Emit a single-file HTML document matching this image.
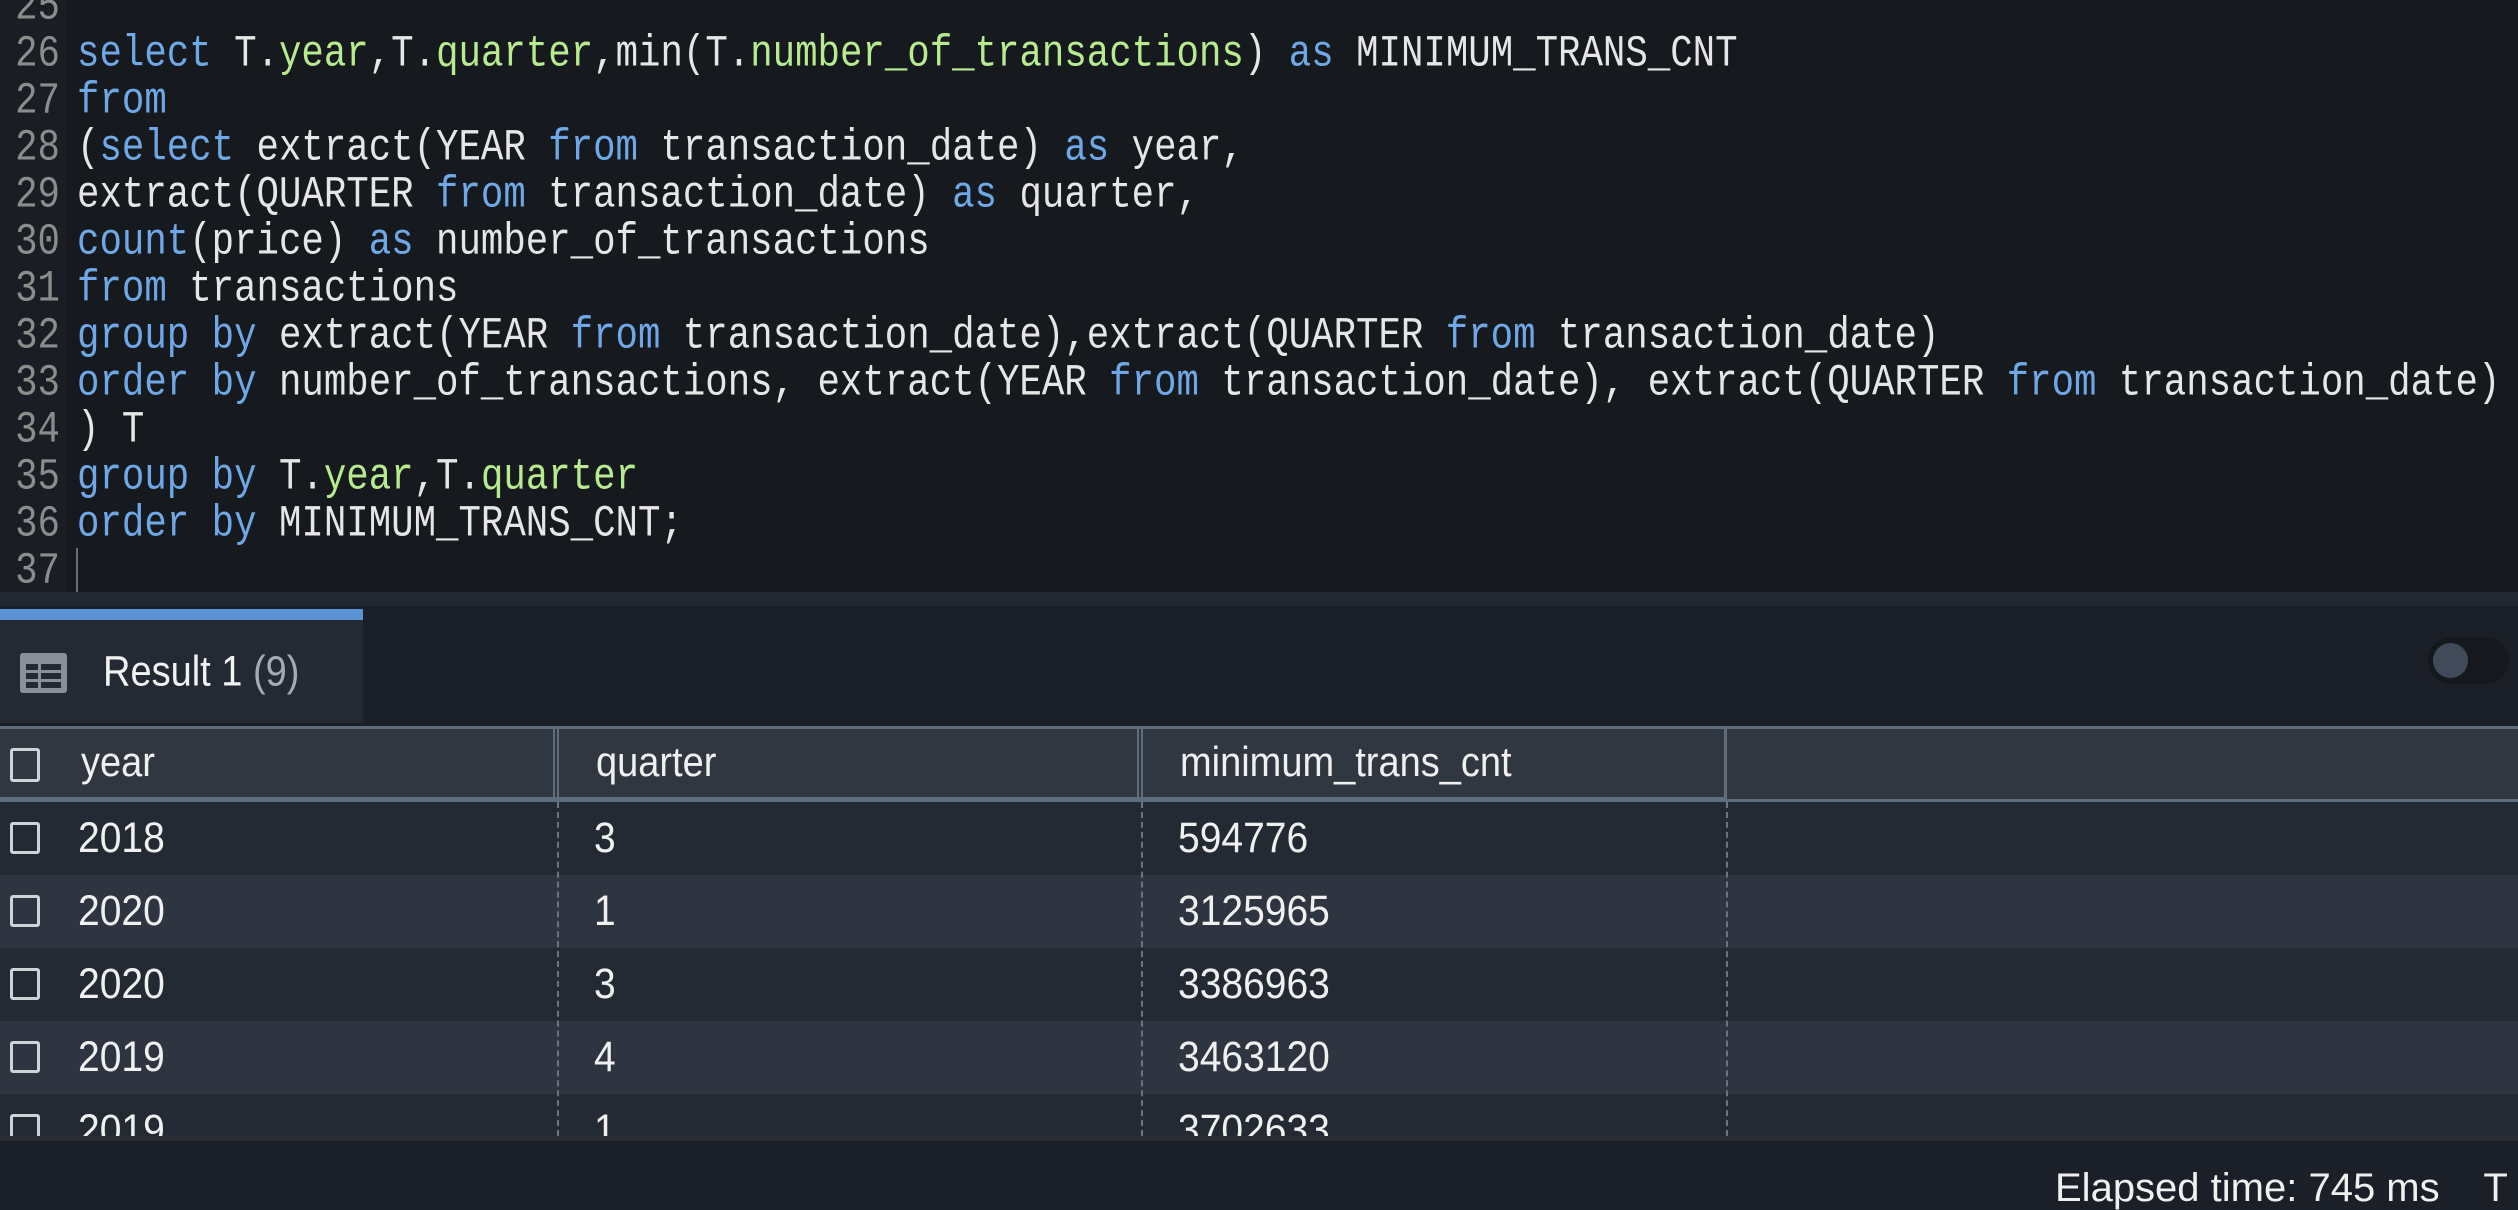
<!DOCTYPE html>
<html><head><meta charset="utf-8"><style>
*{margin:0;padding:0;box-sizing:border-box}
body{width:2518px;height:1183px;overflow:hidden;background:#1b1f27;position:relative;font-family:"Liberation Sans",sans-serif}
#ed{position:absolute;left:0;top:0;width:2518px;height:592px;background:#161a1f;overflow:hidden}
#gut{position:absolute;left:0;top:0;width:66px;height:592px;background:#1a1e24}
.ln{position:absolute;left:0;width:60px;text-align:right;font-family:"Liberation Mono",monospace;font-size:37.4px;color:#8c8c8c;line-height:47px;transform:scaleY(1.18);transform-origin:left center}
.cl{position:absolute;left:77px;font-family:"Liberation Mono",monospace;font-size:37.4px;color:#e6e6e6;line-height:47px;white-space:pre;transform:scaleY(1.18);transform-origin:left center}
.k{color:#6fa8e6}.g{color:#b8eb8f}
.row{position:absolute;left:0;width:2518px;height:73px}
.cb{position:absolute;left:10px;width:30px;height:32px;border:3px solid #cfd3d8;border-radius:3px}
.t{position:absolute;font-size:39px;color:#f0f0f0;line-height:73px;white-space:pre;transform:scaleY(1.1);transform-origin:left center}
</style></head><body>
<div id="ed"><div id="gut"></div>
<div class="ln" style="top:-15px">25</div>
<div class="ln" style="top:32px">26</div><div class="cl" style="top:32px"><span class="k">select</span> T.<span class="g">year</span>,T.<span class="g">quarter</span>,min(T.<span class="g">number_of_transactions</span>) <span class="k">as</span> MINIMUM_TRANS_CNT</div>
<div class="ln" style="top:79px">27</div><div class="cl" style="top:79px"><span class="k">from</span></div>
<div class="ln" style="top:126px">28</div><div class="cl" style="top:126px">(<span class="k">select</span> extract(YEAR <span class="k">from</span> transaction_date) <span class="k">as</span> year,</div>
<div class="ln" style="top:173px">29</div><div class="cl" style="top:173px">extract(QUARTER <span class="k">from</span> transaction_date) <span class="k">as</span> quarter,</div>
<div class="ln" style="top:220px">30</div><div class="cl" style="top:220px"><span class="k">count</span>(price) <span class="k">as</span> number_of_transactions</div>
<div class="ln" style="top:267px">31</div><div class="cl" style="top:267px"><span class="k">from</span> transactions</div>
<div class="ln" style="top:314px">32</div><div class="cl" style="top:314px"><span class="k">group by</span> extract(YEAR <span class="k">from</span> transaction_date),extract(QUARTER <span class="k">from</span> transaction_date)</div>
<div class="ln" style="top:361px">33</div><div class="cl" style="top:361px"><span class="k">order by</span> number_of_transactions, extract(YEAR <span class="k">from</span> transaction_date), extract(QUARTER <span class="k">from</span> transaction_date)</div>
<div class="ln" style="top:408px">34</div><div class="cl" style="top:408px">) T</div>
<div class="ln" style="top:455px">35</div><div class="cl" style="top:455px"><span class="k">group by</span> T.<span class="g">year</span>,T.<span class="g">quarter</span></div>
<div class="ln" style="top:502px">36</div><div class="cl" style="top:502px"><span class="k">order by</span> MINIMUM_TRANS_CNT;</div>
<div class="ln" style="top:549px">37</div>
<div style="position:absolute;left:76px;top:548px;width:2px;height:44px;background:#6a6f76"></div>
</div>
<div style="position:absolute;left:0;top:592px;width:2518px;height:14px;background:#222831"></div>
<div style="position:absolute;left:0;top:609px;width:363px;height:11px;background:#5b93d6"></div>
<div style="position:absolute;left:0;top:620px;width:363px;height:103px;background:#232a33"></div>
<svg style="position:absolute;left:20px;top:653px" width="47" height="40" viewBox="0 0 47 40"><rect x="0" y="0" width="47" height="40" rx="3" fill="#8a9097"/><g fill="#232a33"><rect x="6" y="11" width="12" height="6"/><rect x="21" y="11" width="20" height="6"/><rect x="6" y="20" width="12" height="6"/><rect x="21" y="20" width="20" height="6"/><rect x="6" y="29" width="12" height="6"/><rect x="21" y="29" width="20" height="6"/></g></svg>
<div style="position:absolute;left:103px;top:650px;font-size:38px;color:#f2f2f2;line-height:44px;transform:scaleY(1.12);transform-origin:left center">Result 1 <span style="color:#a3abb6">(9)</span></div>
<div style="position:absolute;left:2428px;top:637px;width:81px;height:47px;border-radius:24px;background:#15191d"></div>
<div style="position:absolute;left:2433px;top:643px;width:35px;height:35px;border-radius:50%;background:#404a58"></div>
<div style="position:absolute;left:0;top:726px;width:2518px;height:76px;background:#303741;border-top:3px solid #5f6c7b"></div>
<div style="position:absolute;left:0;top:726px;width:1727px;height:74px;border:3px solid #5f6c7b;border-left:none"></div>
<div style="position:absolute;left:553px;top:726px;width:6px;height:74px;border-left:2px solid #5f6c7b;border-right:2px solid #5f6c7b"></div>
<div style="position:absolute;left:1137px;top:726px;width:6px;height:74px;border-left:2px solid #5f6c7b;border-right:2px solid #5f6c7b"></div>
<div class="cb" style="top:748px;height:34px"></div>
<div class="t" style="left:81px;top:727px;font-size:38px">year</div>
<div class="t" style="left:596px;top:727px;font-size:38px">quarter</div>
<div class="t" style="left:1180px;top:727px;font-size:38px">minimum_trans_cnt</div>
<div style="position:absolute;left:0;top:799px;width:2518px;height:3px;background:#5f6c7b"></div>
<div class="row" style="top:802px;background:#232a33"><div class="cb" style="top:20px"></div><div class="t" style="left:78px">2018</div><div class="t" style="left:594px">3</div><div class="t" style="left:1178px">594776</div></div>
<div class="row" style="top:875px;background:#2e3440"><div class="cb" style="top:20px"></div><div class="t" style="left:78px">2020</div><div class="t" style="left:594px">1</div><div class="t" style="left:1178px">3125965</div></div>
<div class="row" style="top:948px;background:#232a33"><div class="cb" style="top:20px"></div><div class="t" style="left:78px">2020</div><div class="t" style="left:594px">3</div><div class="t" style="left:1178px">3386963</div></div>
<div class="row" style="top:1021px;background:#2e3440"><div class="cb" style="top:20px"></div><div class="t" style="left:78px">2019</div><div class="t" style="left:594px">4</div><div class="t" style="left:1178px">3463120</div></div>
<div class="row" style="top:1094px;height:42px;background:#232a33;overflow:hidden"><div class="cb" style="top:20px"></div><div class="t" style="left:78px">2019</div><div class="t" style="left:594px">1</div><div class="t" style="left:1178px">3702633</div></div>
<div style="position:absolute;left:557px;top:802px;height:334px;border-left:2px dashed #6a7380"></div>
<div style="position:absolute;left:1141px;top:802px;height:334px;border-left:2px dashed #6a7380"></div>
<div style="position:absolute;left:1726px;top:802px;height:334px;border-left:2px dashed #6a7380"></div>
<div style="position:absolute;left:0;top:1136px;width:2518px;height:5px;background:#2a2e33"></div>
<div style="position:absolute;left:2055px;top:1166px;font-size:40px;color:#f0f0f0;line-height:44px;white-space:pre">Elapsed time: 745 ms    T</div>
</body></html>
